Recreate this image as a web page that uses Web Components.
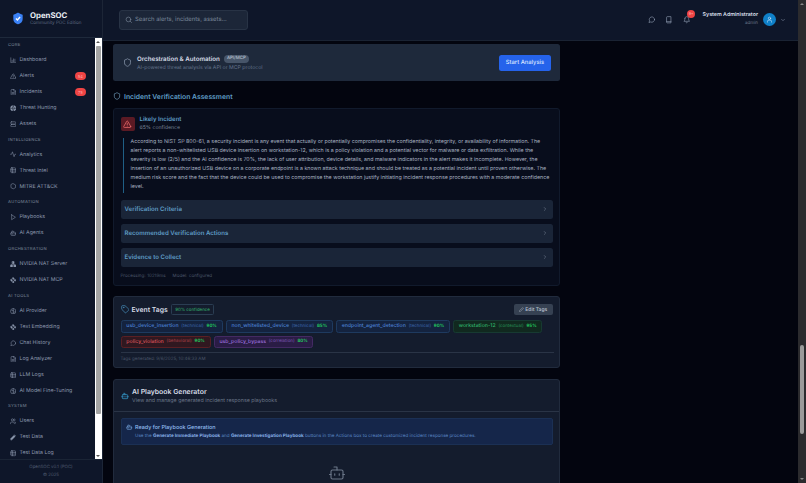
<!DOCTYPE html>
<html><head><meta charset="utf-8"><style>
html,body{margin:0;height:100%;overflow:hidden;background:#03050f;font-family:Inter,"Liberation Sans",sans-serif;text-rendering:geometricPrecision}
</style></head><body>
<app-shell></app-shell>
<script>
const I={
chart:'<path d="M3 3v18h18"/><path d="M8 17v-5M13 17V7M18 17v-9"/>',
tri:'<path d="M21.7 18 13.7 4a2 2 0 0 0-3.4 0L2.3 18A2 2 0 0 0 4 21h16a2 2 0 0 0 1.7-3Z"/><path d="M12 9v4M12 17h.01"/>',
file:'<path d="M14 2H6a2 2 0 0 0-2 2v16a2 2 0 0 0 2 2h12a2 2 0 0 0 2-2V8Z"/><path d="M14 2v6h6M8 13h8M8 17h8"/>',
globe:'<circle cx="12" cy="12" r="10" fill="currentColor"/><path d="M2 12h20M12 2a15 15 0 0 1 0 20M12 2a15 15 0 0 0 0 20" stroke="#0f172a"/>',
server:'<rect x="3" y="3" width="18" height="8" rx="2"/><rect x="3" y="13" width="18" height="8" rx="2"/>',
activity:'<path d="M22 12h-4l-3 9L9 3l-3 9H2"/>',
db:'<rect x="3" y="3" width="18" height="18" rx="3"/><path d="M3 9h18M3 15h18M9 3v18"/>',
hex:'<path d="M12 2.5 20.5 7v10L12 21.500 3.500 17V7Z" stroke-linejoin="round"/>',
play:'<path d="m6 3 14 9-14 9V3Z"/>',
bot:'<path d="M12 8V4H8"/><rect x="4" y="8" width="16" height="12" rx="2"/><path d="M2 14h2M20 14h2M15 13v2M9 13v2"/>',
net:'<rect x="9" y="2" width="6" height="7" fill="currentColor"/><rect x="2" y="15" width="7" height="7" fill="currentColor"/><rect x="15" y="15" width="7" height="7" fill="currentColor"/><path d="M12 9v3M5.500 15v-3h13v3"/>',
dia:'<path d="m12 2 3.500 3.500L12 9 8.500 5.500ZM5.500 8.500 9 12l-3.500 3.500L2 12ZM18.500 8.500 22 12l-3.500 3.500L15 12ZM12 15l3.500 3.500L12 22l-3.500-3.500Z" fill="currentColor"/>',
brain:'<circle cx="12" cy="12" r="10"/><path d="M12 2v20M7 9h5M12 15h5"/>',
chat:'<path d="M21 11.500a8.500 8.500 0 0 1-12.500 7.500L3 21l2-5.500A8.500 8.500 0 1 1 21 11.500Z"/>',
users:'<path d="M16 21v-2a4 4 0 0 0-4-4H6a4 4 0 0 0-4 4v2"/><circle cx="9" cy="7" r="4"/><path d="M22 21v-2a4 4 0 0 0-3-3.900M16 3.100a4 4 0 0 1 0 7.800"/>',
pencil:'<path d="M3 21v-4L15 5l4 4L7 21Z" fill="currentColor"/><path d="m17 3 4 4"/>',
pen:'<path d="M3 21v-4L16 4a2 2 0 0 1 4 4L7 21Z"/>',
search:'<circle cx="11" cy="11" r="7.500"/><path d="m21 21-4.500-4.500"/>',
book:'<path d="M5 4a2 2 0 0 1 2-2h12v20H7a2 2 0 0 1-2-2Z"/><path d="M5 18h14"/>',
bell:'<path d="M6 8a6 6 0 0 1 12 0c0 7 3 9 3 9H3s3-2 3-9"/><path d="M10.300 21a1.900 1.900 0 0 0 3.400 0"/>',
user:'<circle cx="12" cy="8" r="4"/><path d="M5 21v-2a5 5 0 0 1 5-5h4a5 5 0 0 1 5 5v2"/>',
chev:'<path d="m6 9 6 6 6-6"/>',
right:'<path d="m9 6 6 6-6 6"/>',
shield:'<path d="M20 13c0 5-3.500 7.500-7.700 9a1 1 0 0 1-.6 0C7.500 20.500 4 18 4 13V6a1 1 0 0 1 1-1c2 0 4.500-1.200 6.200-2.700a1.200 1.200 0 0 1 1.600 0C14.500 3.800 17 5 19 5a1 1 0 0 1 1 1Z"/>',
tag:'<path d="M12.600 2.600A2 2 0 0 0 11.200 2H4a2 2 0 0 0-2 2v7.200a2 2 0 0 0 .6 1.400l8.700 8.700a2.400 2.400 0 0 0 3.400 0l6.600-6.600a2.400 2.400 0 0 0 0-3.400Z"/><circle cx="7.500" cy="7.500" r=".6"/>'
};
const svg=(n,s,c='currentColor',w=2)=>`<svg xmlns="http://www.w3.org/2000/svg" width="${s}" height="${s}" viewBox="0 0 24 24" fill="none" stroke="${c}" stroke-width="${w}" stroke-linecap="round" stroke-linejoin="round" style="display:block;flex:none">${I[n]}</svg>`;
function def(name,css,html){customElements.define(name,class extends HTMLElement{constructor(){super();const r=this.attachShadow({mode:'open'});r.innerHTML=`<style>${css}</style>`+(typeof html==='function'?html(this):html);}});}

def('nav-item',`:host{display:flex;align-items:center;height:16px;padding-left:9.500px;gap:3.500px;color:#8f9bb0;font-size:5.250px;white-space:nowrap}
.b{margin-left:auto;margin-right:9px;width:10.500px;height:8px;border-radius:5px;background:#ef4444;color:#fca5a5;font-size:4px;display:flex;align-items:center;justify-content:center}`,
e=>`${svg(e.getAttribute('i'),6.500,'currentColor',1.900)}<span>${e.getAttribute('t')}</span>${e.getAttribute('b')?`<span class="b">${e.getAttribute('b')}</span>`:''}`);
def('nav-label',`:host{display:block;height:8px;line-height:8px;margin-top:4.700px;margin-bottom:2px;padding-left:8px;color:#6b7688;font-size:4.200px;font-weight:500;letter-spacing:.25px}`,`<slot></slot>`);

def('side-bar',`:host{display:flex;flex-direction:column;width:103px;flex:none;height:483px;background:#0e1629;border-right:1px solid #1c2536;box-sizing:border-box}
.logo{height:37.500px;box-sizing:border-box;flex:none;border-bottom:1px solid #1e293b;display:flex;align-items:center;padding-left:10.500px;gap:5.500px}
.n{color:#e8edf4;font-size:7.800px;font-weight:700;line-height:10px}.s{color:#5f6b80;font-size:4.550px;line-height:7px}
.mid{flex:1;display:flex;min-height:0}.nav{flex:1;overflow:hidden}
nav-label:first-child{margin-top:4.500px}
.sb{width:7px;background:#fff;flex:none;margin-right:.5px;display:flex;flex-direction:column;align-items:center}
.th{width:5px;background:#a3a3a3;height:368px;margin-top:3px;border-radius:1px}
.up,.dn{width:0;height:0;border:2px solid transparent;flex:none}.up{border-bottom:2.500px solid #555;margin-top:3px;border-top:0}.dn{border-top:2.500px solid #555;margin-top:auto;margin-bottom:2px;border-bottom:0}
.foot{height:24px;flex:none;border-top:1px solid #1a2435;text-align:center;color:#4f5b70;font-size:4.400px;line-height:8px;padding-top:3.500px;box-sizing:border-box}`,
`<div class="logo"><svg width="14" height="15" viewBox="0 0 24 24" style="flex:none"><path d="M20 13c0 5-3.500 7.500-7.700 9a1 1 0 0 1-.6 0C7.500 20.500 4 18 4 13V6a1 1 0 0 1 1-1c2 0 4.500-1.200 6.200-2.700a1.200 1.200 0 0 1 1.600 0C14.500 3.800 17 5 19 5a1 1 0 0 1 1 1Z" fill="#3b82f6"/><path d="m8.500 12 2.500 2.500 4.500-5" fill="none" stroke="#fff" stroke-width="2.400"/></svg><div><div class="n">OpenSOC</div><div class="s">Community POC Edition</div></div></div>
<div class="mid"><div class="nav">
<nav-label>CORE</nav-label>
<nav-item i="chart" t="Dashboard"></nav-item><nav-item i="tri" t="Alerts" b="54"></nav-item><nav-item i="file" t="Incidents" b="75"></nav-item><nav-item i="globe" t="Threat Hunting"></nav-item><nav-item i="server" t="Assets"></nav-item>
<nav-label>INTELLIGENCE</nav-label>
<nav-item i="activity" t="Analytics"></nav-item><nav-item i="db" t="Threat Intel"></nav-item><nav-item i="hex" t="MITRE ATT&amp;CK"></nav-item>
<nav-label>AUTOMATION</nav-label>
<nav-item i="play" t="Playbooks"></nav-item><nav-item i="bot" t="AI Agents"></nav-item>
<nav-label>ORCHESTRATION</nav-label>
<nav-item i="net" t="NVIDIA NAT Server"></nav-item><nav-item i="dia" t="NVIDIA NAT MCP"></nav-item>
<nav-label>AI TOOLS</nav-label>
<nav-item i="brain" t="AI Provider"></nav-item><nav-item i="dia" t="Text Embedding"></nav-item><nav-item i="chat" t="Chat History"></nav-item><nav-item i="file" t="Log Analyzer"></nav-item><nav-item i="db" t="LLM Logs"></nav-item><nav-item i="brain" t="AI Model Fine-Tuning"></nav-item>
<nav-label>SYSTEM</nav-label>
<nav-item i="users" t="Users"></nav-item><nav-item i="pencil" t="Test Data"></nav-item><nav-item i="db" t="Test Data Log"></nav-item>
</div><div class="sb"><div class="up"></div><div class="th"></div><div class="dn"></div></div></div>
<div class="foot">OpenSOC v0.1 (POC)<br>© 2025</div>`);

def('top-bar',`:host{display:flex;align-items:center;height:40.500px;flex:none;box-sizing:border-box;background:#0e1629;border-bottom:1px solid #1a2333;padding:0 12px 0 16px;color:#8f9bb0}
.s{width:129px;height:20px;box-sizing:border-box;background:#1c2638;border:.5px solid #283345;border-radius:3px;display:flex;align-items:center;gap:3px;padding-left:4.500px;color:#7a8699;font-size:5.900px}
.i{margin-left:auto;display:flex;align-items:center;gap:10px}.bell{position:relative}
.bd{position:absolute;top:-6.500px;right:-5px;width:8px;height:8px;border-radius:50%;background:#ef4444;color:#fecaca;font-size:3.800px;display:flex;align-items:center;justify-content:center}
.u{margin-left:12.500px;text-align:right;line-height:7.500px}.u b{display:block;color:#d8dee8;font-size:5.300px;font-weight:600}.u span{display:block;color:#6b7688;font-size:4.500px}
.a{width:13px;height:13px;border-radius:50%;background:#0f80c8;display:flex;align-items:center;justify-content:center;color:#dbeafe;margin:0 4.500px 0 4.500px}`,
`<div class="s">${svg('search',7.500)}<span>Search alerts, incidents, assets...</span></div>
<div class="i">${svg('chat',7.500)}${svg('book',7.500)}<div class="bell">${svg('bell',7.500)}<div class="bd">9+</div></div></div>
<div class="u"><b>System Administrator</b><span>admin</span></div><div class="a">${svg('user',7)}</div>${svg('chev',6)}`);

def('orch-card',`:host{display:flex;align-items:center;height:37px;background:#1e293b;border-radius:2.500px;padding:0 9px 0 10px;color:#cbd5e1;flex:none}
.t{display:flex;align-items:center;gap:4px;font-size:6.200px;font-weight:600;color:#d5dbe5;line-height:9px}.pill{background:#475569;color:#b6c0cf;border-radius:4px;padding:0 3px;font-size:4.400px;font-weight:500;line-height:8px}
.d{color:#64748b;font-size:5.200px;line-height:8px}.w{margin-left:5px;padding-top:1px}
.btn{margin-left:auto;width:52px;height:16px;background:#2563eb;border-radius:2.500px;color:#dbe6ff;font-size:5.800px;font-weight:500;display:flex;align-items:center;justify-content:center}`,
`${svg('shield',9,'#94a3b8',1.800)}<div class="w"><div class="t">Orchestration &amp; Automation<span class="pill">API/MCP</span></div><div class="d">AI-powered threat analysis via API or MCP protocol</div></div><div class="btn">Start Analysis</div>`);

def('acc-row',`:host{display:flex;align-items:center;height:19px;margin-top:5px;background:#1a2538;border-radius:2.500px;padding:0 5px 0 4px;color:#5f9cc4;font-size:6.100px;font-weight:600}
svg{margin-left:auto}`,e=>`<span><slot></slot></span>${svg('right',6,'#7a8699')}`);

def('verify-card',`:host{display:block;flex:none;margin-top:6px;height:178px;box-sizing:border-box;background:#080d1c;border:.5px solid #111a2c;border-radius:3px;padding:7px 6.500px 0}
.h{display:flex;align-items:center;gap:5px;height:16px}.ic{width:14px;height:14px;background:#5b1a24;border-radius:2px;color:#f87171;display:flex;align-items:center;justify-content:center}
.t{color:#5f9cc4;font-size:6px;font-weight:600;line-height:9px}.c{color:#7a8699;font-size:5.200px;line-height:9px}
.p{margin:6px 0 6.500px 2px;border-left:1px solid #1f5f85;padding-left:7px;color:#aab4c3;font-size:5.300px;line-height:9.100px;height:55px;white-space:nowrap}
.m{color:#4a5568;font-size:4.500px;margin-top:7px;word-spacing:.5px}`,
`<div class="h"><div class="ic">${svg('tri',8.500)}</div><div><div class="t">Likely Incident</div><div class="c">65% confidence</div></div></div>
<div class="p">According to NIST SP 800-61, a security incident is any event that actually or potentially compromises the confidentiality, integrity, or availability of information. The<br>alert reports a non-whitelisted USB device insertion on workstation-12, which is a policy violation and a potential vector for malware or data exfiltration. While the<br>severity is low (2/5) and the AI confidence is 70%, the lack of user attribution, device details, and malware indicators in the alert makes it incomplete. However, the<br>insertion of an unauthorized USB device on a corporate endpoint is a known attack technique and should be treated as a potential incident until proven otherwise. The<br>medium risk score and the fact that the device could be used to compromise the workstation justify initiating incident response procedures with a moderate confidence<br>level.</div>
<acc-row>Verification Criteria</acc-row><acc-row>Recommended Verification Actions</acc-row><acc-row>Evidence to Collect</acc-row>
<div class="m">Processing: 10219ms &nbsp; &nbsp;Model: configured</div>`);

def('tag-chip',`:host{display:inline-flex;align-items:center;gap:2.800px;height:12.500px;box-sizing:border-box;padding:0 4.800px;border-radius:2.500px;border:.5px solid var(--b);background:var(--g);color:var(--c);font-size:5.200px;font-weight:500;white-space:nowrap}
.k{font-size:4.400px;opacity:.6}.p{font-size:4.400px;font-weight:700;color:#22c55e}`,
e=>`<span><slot></slot></span><span class="k">(${e.getAttribute('k')})</span><span class="p">${e.getAttribute('p')}</span>`);

def('tags-card',`:host{display:block;flex:none;margin-top:10px;height:72px;box-sizing:border-box;background:#141c2d;border:.5px solid #212b3d;border-radius:3px;padding:5.500px 6.500px 0}
.h{display:flex;align-items:center;height:14px;gap:2.500px;color:#d5dbe5;font-size:6.800px;font-weight:600}.cf{margin-left:1px;border:.5px solid #2a3d52;border-radius:1.500px;padding:0 3px;height:11px;line-height:11px;font-size:4.400px;font-weight:500;color:#2f9e63;box-sizing:border-box}
.e{margin-left:auto;width:39px;height:11px;background:#364152;border-radius:2px;color:#bcc5d2;font-size:5px;font-weight:500;display:flex;align-items:center;justify-content:center;gap:1.500px}
.r{display:flex;flex-wrap:wrap;gap:3px 3px;margin-top:3.500px;width:434px}
tag-chip{--b:#1e3a5f;--g:#14233f;--c:#4d82d4}tag-chip.g{--b:#173a32;--g:#11291f;--c:#2fb36a}tag-chip.r2{--b:#5a1f24;--g:#301820;--c:#d9535a}tag-chip.v{--b:#432a63;--g:#2a1c45;--c:#9b6fdc}
.d{border-top:.5px solid #2a3446;margin-top:4px;padding-top:4px;color:#4a5568;font-size:4.500px;width:433px}`,
`<div class="h">${svg('tag',8.500,'#4f9fd0',1.800)}<span>Event Tags</span><span class="cf">90% confidence</span><span class="e">${svg('pen',5)}<span>Edit Tags</span></span></div>
<div class="r"><tag-chip k="technical" p="90%">usb_device_insertion</tag-chip><tag-chip k="technical" p="85%">non_whitelisted_device</tag-chip><tag-chip k="technical" p="90%">endpoint_agent_detection</tag-chip><tag-chip class="g" k="contextual" p="95%">workstation-12</tag-chip><tag-chip class="r2" k="behavioral" p="90%">policy_violation</tag-chip><tag-chip class="v" k="correlation" p="80%">usb_policy_bypass</tag-chip></div>
<div class="d">Tags generated: 9/6/2025, 10:46:33 AM</div>`);

def('playbook-card',`:host{display:block;flex:none;margin-top:11px;height:130px;box-sizing:border-box;background:#141c2d;border:.5px solid #212b3d;border-radius:3px}
.h{height:32px;box-sizing:border-box;display:flex;align-items:center;gap:3.500px;padding-left:6.500px;border-bottom:.5px solid #2a3446}.t{color:#d5dbe5;font-size:6.900px;font-weight:600;line-height:10px}.s{color:#6b7688;font-size:5.300px;line-height:8px}
.box{margin:5.500px 6.500px 0;height:27px;box-sizing:border-box;background:#15264a;border:.5px solid #1b3054;border-radius:2px;display:flex;padding:5.500px 4.500px;gap:2.500px;color:#7fb0ec}
.a{font-size:5.450px;font-weight:500;color:#93bdf0;line-height:8px}.b{font-size:4.600px;line-height:8px;color:#5b86c4;white-space:nowrap;margin-top:1px}.b b{color:#86aee6}
.r{display:flex;justify-content:center;margin-top:19px;color:#6b7688}`,
`<div class="h">${svg('bot',8,'#38a3d8')}<div><div class="t">AI Playbook Generator</div><div class="s">View and manage generated incident response playbooks</div></div></div>
<div class="box">${svg('bot',6.500)}<div><div class="a">Ready for Playbook Generation</div><div class="b">Use the <b>Generate Immediate Playbook</b> and <b>Generate Investigation Playbook</b> buttons in the Actions box to create customized incident response procedures.</div></div></div>
<div class="r">${svg('bot',18,'#6b7688',1.500)}</div>`);

def('page-scrollbar',`:host{display:flex;flex-direction:column;align-items:center;width:8px;flex:none;height:483px;background:#2b2b2e}
.u,.d{width:0;height:0;border:2px solid transparent}.u{margin-top:3px;border-top:0;border-bottom:2.500px solid #888}.d{margin-top:auto;margin-bottom:3px;border-bottom:0;border-top:2.500px solid #888}
.t{width:4.500px;height:89px;margin-top:340px;background:#9a9a9a;border-radius:2px}`,`<div class="u"></div><div class="t"></div><div class="d"></div>`);

def('main-view',`:host{display:flex;flex-direction:column;flex:1;min-width:0;height:483px;overflow:hidden;background:#03050f}
.c{display:flex;flex-direction:column;width:447px;margin-left:10px;padding-top:3.500px}
.h{display:flex;align-items:center;gap:3px;height:12px;margin-top:9px;color:#5f9cc4;font-size:6.800px;font-weight:600;flex:none}`,
`<top-bar></top-bar><div class="c"><orch-card></orch-card><div class="h">${svg('shield',8,'#7fb0d0',1.800)}<span>Incident Verification Assessment</span></div><verify-card></verify-card><tags-card></tags-card><playbook-card></playbook-card></div>`);

def('app-shell',`:host{display:flex;width:806px;height:483px;overflow:hidden}`,`<side-bar></side-bar><main-view></main-view><page-scrollbar></page-scrollbar>`);
</script>
</body></html>
